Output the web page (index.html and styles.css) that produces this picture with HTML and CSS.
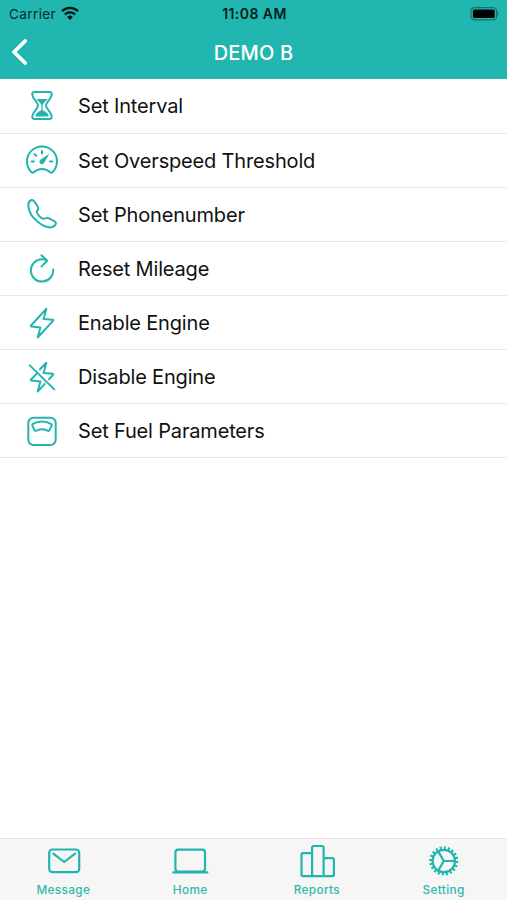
FILE: index.html
```html
<!DOCTYPE html>
<html lang="en">
<head>
<meta charset="utf-8">
<title>DEMO B</title>
<link rel="stylesheet" href="styles.css">
</head>
<body>
<div class="screen">
  <header class="header">
    <div class="status">
      <div class="carrier"><span>Carrier</span>
        <svg class="wifi" viewBox="0 0 18 14"><path d="M1 5.2a11.5 11.5 0 0 1 16 0M3.900 8.500a7.300 7.300 0 0 1 10.200 0"/><path class="solid" d="M6.100 11a4.200 4.200 0 0 1 5.800 0L9 14z"/></svg>
      </div>
      <div class="clock">11:08 AM</div>
      <svg class="battery" viewBox="0 0 30 14"><rect class="shell" x="1" y=".7" width="25.6" height="12.2" rx="3.6"/><rect x="2.9" y="2.6" width="21.8" height="8.4" rx="1.6"/><path class="cap" d="M27.6 4.4q2.6 2.4 0 4.8z"/></svg>
    </div>
    <div class="nav">
      <svg class="back" viewBox="0 0 18 28"><path d="M14.2 3 3 14l11.2 11"/></svg>
      <h1 class="title">DEMO B</h1>
    </div>
  </header>
  <main class="list">
    <div class="row"><svg class="icon" viewBox="0 0 36 36"><path d="M10.500 4h15c1.800 0 2.500 1.200 2.200 2.800-.8 5-5.700 7.200-5.700 10.700s4.900 5.700 5.700 10.700c.3 1.600-.4 2.800-2.200 2.800h-15c-1.800 0-2.500-1.200-2.200-2.800.8-5 5.700-7.200 5.700-10.700S9.100 11.800 8.300 6.800C8 5.200 8.700 4 10.500 4z"/><path class="fill" d="M12.500 11h11c-1.600 2.400-4.400 4-4.900 6v5c1.200 1.200 6 3 6 5.500 0 .8-.4 1-1 1H12.400c-.6 0-1-.2-1-1 0-2.500 4.800-4.300 6-5.500v-5c-.5-2-3.300-3.600-4.900-6z"/></svg><span>Set Interval</span></div>
    <div class="row"><svg class="icon" viewBox="0 0 36 36"><path d="M7.700 30.300a15 15 0 1 1 20.600 0c-.5.500-1.100.6-1.700.1-5.100-4.700-12.100-4.700-17.200 0-.6.500-1.200.4-1.700-.1z"/><path d="M18 9v2.400M7.800 19.500H10M26 19.500h2.200M10.700 12.200l1.500 1.500"/><path class="fill" d="m25.300 11.700-5.200 9.200a2.500 2.500 0 1 1-3.400-3.400z"/></svg><span>Set Overspeed Threshold</span></div>
    <div class="row"><svg class="icon" viewBox="0 0 36 36"><path d="M7.500 4C9.300 3.300 10.700 5.800 11.900 7.700c1.200 1.900 2.900 3.700 2.300 5.200-.5 1.300-1.500 1.800-1.300 3.200.3 2 3.100 5.100 5.200 6.200 2.200 1.100 3.500-.4 5.400-.2 1.900.2 5 2.100 6.800 3.100 1.800 1 2 2 1.200 3.400-1 1.700-2.700 2.800-5.200 2.800C20 31.400 13.800 26.500 9.900 22.200 6.500 18.400 4.300 12.900 4.300 8.700c0-2.200 1.300-3.900 3.200-4.700z"/></svg><span>Set Phonenumber</span></div>
    <div class="row"><svg class="icon" viewBox="0 0 36 36"><path d="M29.200 19.500A11.200 11.200 0 1 1 18 9.200c1.900 0 3.400.4 5 1.400M17.500 5.200l5.700 5.600-5.700 5.600"/></svg><span>Reset Mileage</span></div>
    <div class="row"><svg class="icon" viewBox="0 0 36 36"><path d="M22.400 3.800 7 20.500c-.5.600-.3 1 .4 1.100l9 .8-2.700 10.100L29 15.900c.5-.6.3-1-.4-1.100l-9-.8z"/></svg><span>Enable Engine</span></div>
    <div class="row"><svg class="icon" viewBox="0 0 36 36"><path d="M5.800 6.400l24.500 24M16 10.300l6.300-6.600L19.600 14l9 .8c.7.100.9.500.4 1.100l-4 4.400M13.200 14.300 7 20.500c-.5.600-.3 1 .4 1.100l9 .8-2.700 10.100 7.100-7.600"/></svg><span>Disable Engine</span></div>
    <div class="row"><svg class="icon" viewBox="0 0 36 36"><rect x="4.300" y="4.800" width="27.400" height="27.200" rx="5.200"/><path d="M9 10.800c5.400-3.200 12.600-3.200 18 0 .9.600 1 1.300.6 2.100l-2 4c-.5 1-1.200 1.200-2.200.7-3.400-1.700-7.400-1.700-10.800 0-1 .5-1.700.3-2.200-.7l-2-4c-.4-.8-.3-1.500.6-2.100z"/></svg><span>Set Fuel Parameters</span></div>
  </main>
  <nav class="tabs">
    <div class="tab"><svg class="icon" viewBox="0 0 36 36"><rect x="4.200" y="6.500" width="30" height="22.600" rx="3.200"/><path d="m8.300 10.600 10.900 8.400 10.900-8.400"/></svg><span>Message</span></div>
    <div class="tab"><svg class="icon" viewBox="0 0 36 36"><rect x="3.400" y="6.600" width="29.600" height="22" rx="2.800"/><path d="M1.200 29.300h34.200"/></svg><span>Home</span></div>
    <div class="tab"><svg class="icon" viewBox="0 0 36 36"><path d="M13.100 33.100H4a1.500 1.500 0 0 1-1.500-1.500v-20A1.500 1.500 0 0 1 4 10.100h9.100V4.500A1.500 1.500 0 0 1 14.600 3h8.500a1.500 1.500 0 0 1 1.500 1.500v10.600h8.800a1.500 1.500 0 0 1 1.500 1.500v15a1.500 1.500 0 0 1-1.500 1.500zM13.100 10v23.100M24.600 15v18.100"/></svg><span>Reports</span></div>
    <div class="tab"><svg class="icon" viewBox="0 0 36 36"><circle cx="17.800" cy="18" r="11.200"/><circle class="teeth" cx="17.800" cy="18" r="13.100" pathLength="200"/><path d="M17.800 18h11.400M17.800 18l-5.700-9.900M17.800 18l-5.700 9.900"/></svg><span>Setting</span></div>
  </nav>
</div>
</body>
</html>
```
FILE: styles.css
```css
* { box-sizing: border-box; }
body { margin: 0; background: #fff; font-family: Inter, "Liberation Sans", sans-serif; }
.screen { height: 900px; display: flex; flex-direction: column; }
.header { height: 79px; background: #21b6b0; flex: none; }
.status { height: 27px; display: grid; grid-template-columns: 1fr auto 1fr; align-items: center; padding: 0 7px 0 9px; color: #062b2a; font-size: 13.500px; }
.carrier { display: flex; align-items: center; gap: 5px; letter-spacing: .4px; }
.clock { font-weight: 600; font-size: 14px; letter-spacing: .45px; color: #031d1c; }
.wifi { width: 18px; height: 14px; margin-top: -2px; fill: none; stroke: #031514; stroke-width: 2.3; }
.wifi .solid { fill: #031514; stroke: none; }
.battery { width: 30px; height: 14px; justify-self: end; }
.battery .shell { fill: none; stroke: #11736f; stroke-width: 1.200; }
.battery .cap { fill: #11736f; }
.nav { height: 50px; display: grid; grid-template-columns: 40px 1fr 40px; align-items: center; }
.back { width: 18px; height: 28px; margin-left: 11px; fill: none; stroke: #fff; stroke-width: 3.800; stroke-linecap: round; stroke-linejoin: round; }
.title { margin: 0; padding-top: 1px; color: #fff; font-size: 20px; font-weight: 500; text-align: center; letter-spacing: .15px; }
.list { flex: 1; padding-top: .4px; }
.row { height: 54.150px; display: flex; align-items: center; gap: 18px; padding-left: 24px; border-bottom: 1px solid #e9e9e9; font-size: 20px; letter-spacing: -.17px; color: #111; }
.row span { padding-top: 1px; }
.icon { width: 36px; height: 36px; flex: none; overflow: visible; fill: none; stroke: #22b5ae; stroke-width: 2; stroke-linecap: round; stroke-linejoin: round; }
.tab .icon { stroke-width: 2.200; }
.icon .fill { fill: #22b5ae; stroke: none; }
.icon .teeth, .tab .icon .teeth { stroke-width: 3; stroke-linecap: butt; stroke-dasharray: 5 5; }
.tabs { height: 62px; flex: none; display: grid; grid-template-columns: repeat(4, 1fr); background: #f6f6f6; border-top: 1px solid #e4e4e4; }
.tab { display: flex; flex-direction: column; align-items: center; padding-top: 4px; gap: 4px; color: #31b9ac; font-size: 11.800px; line-height: 15px; font-weight: 500; letter-spacing: .35px; }
```
